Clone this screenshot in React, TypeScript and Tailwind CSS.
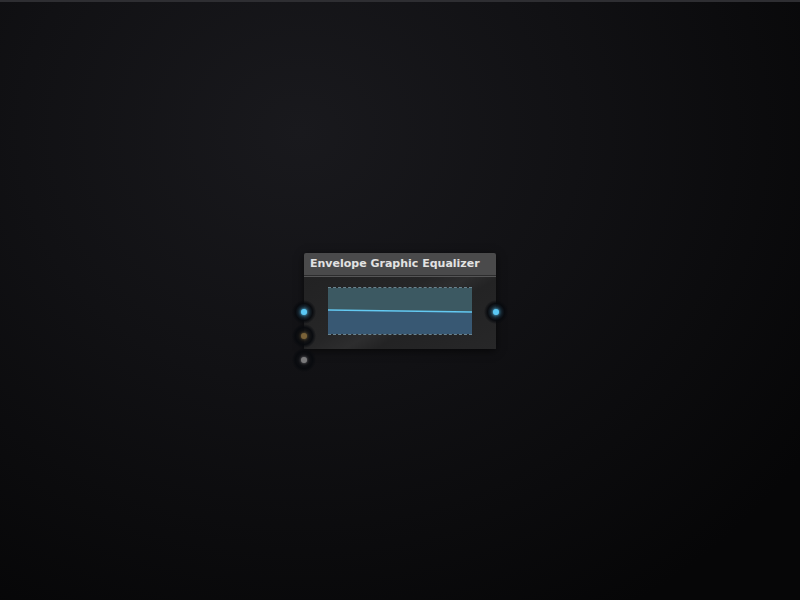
function Port({ color, glow, size = 6 }: { color: string; glow: string; size?: number }) {
  return (
    <div
      className="flex h-[24px] w-[24px] items-center justify-center rounded-full"
      style={{ background: `radial-gradient(circle, ${glow} 0%, rgba(8,10,14,0.95) 50%, rgba(8,10,14,0) 72%)` }}
    >
      <div className="rounded-full" style={{ width: size, height: size, background: color, boxShadow: `0 0 3px ${color}` }} />
    </div>
  );
}

function EnvelopeGraph() {
  return (
    <div className="h-[48px] w-[144px] border-y border-dashed border-[#6a8490]">
      <svg width="144" height="46" viewBox="0 0 144 46" className="block">
        <polygon points="0,0 144,0 144,24 0,22" fill="#3c5962" />
        <polygon points="0,22 144,24 144,46 0,46" fill="#385873" />
        <line x1="0" y1="22" x2="144" y2="24" stroke="#63c9f2" strokeWidth="1.6" />
      </svg>
    </div>
  );
}

export default function App() {
  return (
    <div
      className="flex h-[600px] w-[800px] items-center justify-center overflow-hidden border-t-2 border-[#2e2e32]"
      style={{ background: "radial-gradient(ellipse 620px 560px at 300px 130px, #19191d 0%, #111114 45%, #060607 100%)" }}
    >
      <div className="relative w-[192px] font-['DejaVu_Sans',sans-serif] shadow-[0_2px_8px_rgba(0,0,0,0.6)]">
        <div className="h-[22px] rounded-t-[2px] bg-[#4a4a4b] px-[6px] pt-[4px] text-[11px] font-bold leading-[13px] text-[#e2e2e2]">
          Envelope Graphic Equalizer
        </div>
        <div className="h-[1px] bg-[#2c2c2d]" />
        <div className="h-[1px] bg-[#555556]" />
        <div className="flex h-[72px] items-start justify-center bg-[linear-gradient(150deg,#222223_0%,#262627_40%,#2d2d2e_52%,#232324_62%,#272728_100%)] pt-[10px]">
          <EnvelopeGraph />
        </div>
        <div className="absolute left-[-12px] top-[47px] flex flex-col">
          <Port color="#5ac8f5" glow="rgba(60,130,170,0.5)" />
          <Port color="#7a6238" glow="rgba(40,36,30,0.5)" />
          <Port color="#7a7a7c" glow="rgba(30,30,34,0.6)" />
        </div>
        <div className="absolute right-[-12px] top-[47px]">
          <Port color="#5ac8f5" glow="rgba(60,130,170,0.5)" />
        </div>
      </div>
    </div>
  );
}
